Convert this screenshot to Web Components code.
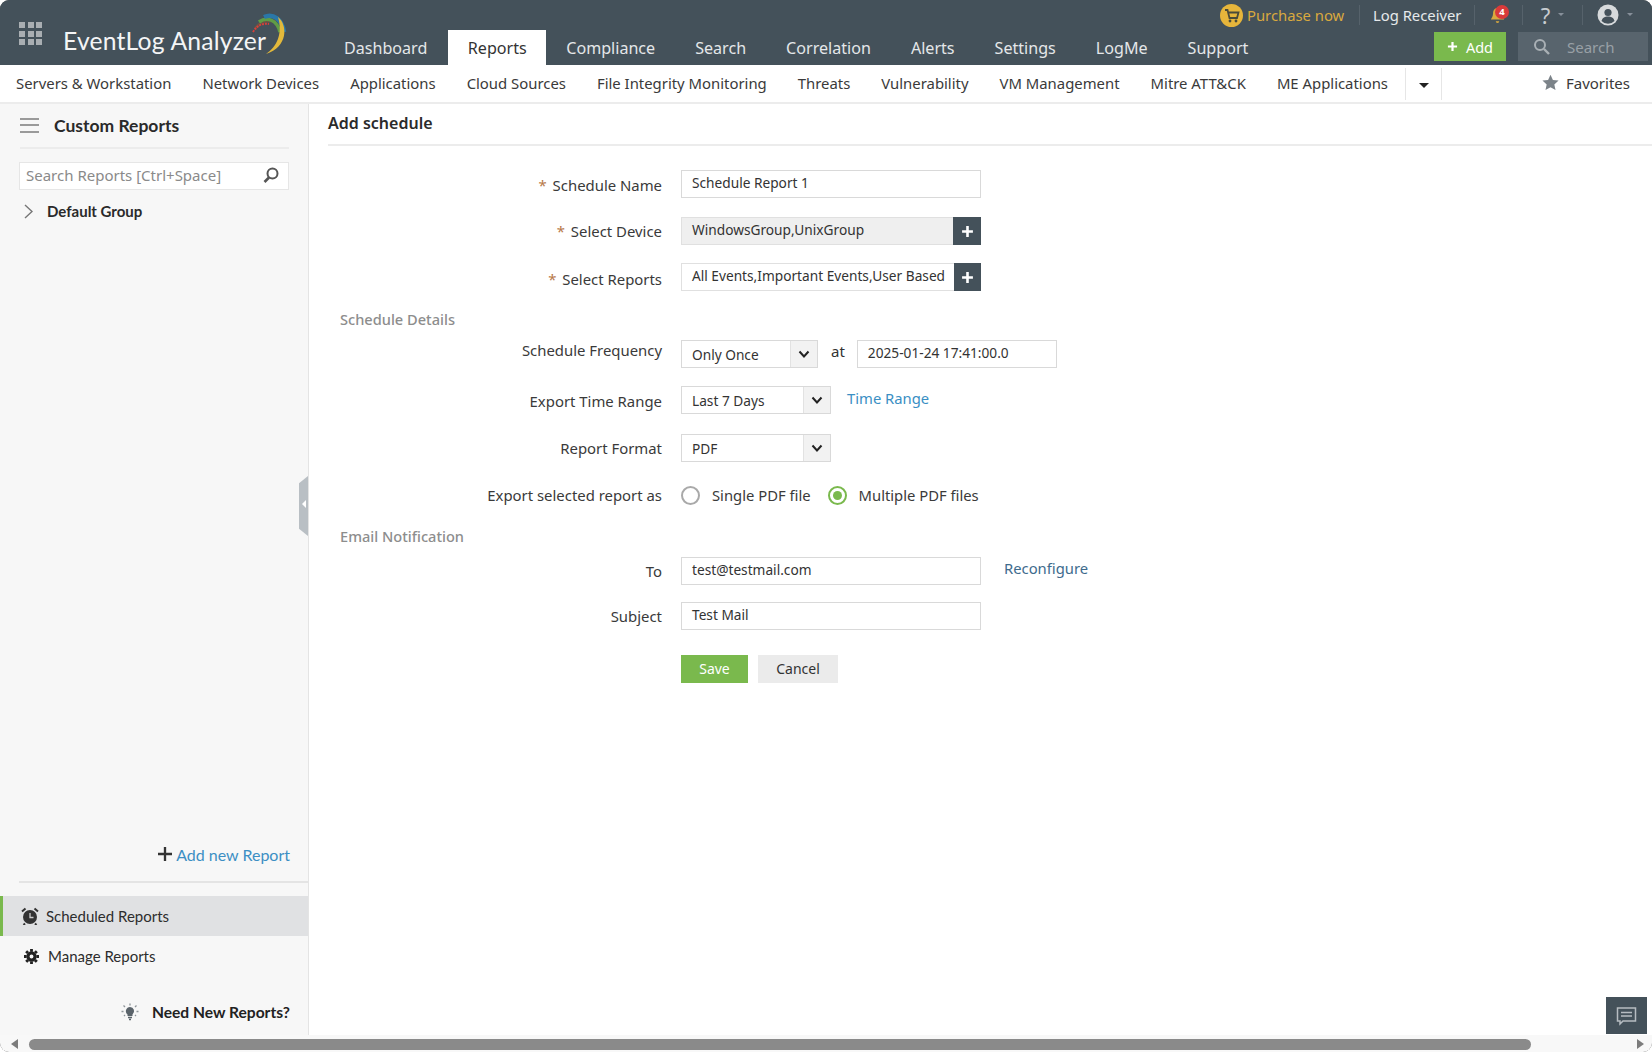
<!DOCTYPE html>
<html>
<head>
<meta charset="utf-8">
<title>EventLog Analyzer</title>
<style>
  html, body { margin: 0; height: 100%; background: #fff; overflow: hidden; }
  body { font-family: "Noto Sans", "Open Sans", sans-serif; color: #333; }
</style>
</head>
<body>
<el-app></el-app>

<script>
const define = (name, css, html) => {
  customElements.define(name, class extends HTMLElement {
    connectedCallback() {
      if (this.shadowRoot) return;
      this.attachShadow({ mode: 'open' });
      const body = typeof html === 'function' ? html(this) : html;
      this.shadowRoot.innerHTML = `<style>${css}</style>${body}`;
    }
  });
};

const plus = (s, c) => `<svg width="${s}" height="${s}" viewBox="0 0 12 12"><path d="M6 1v10M1 6h10" stroke="${c}" stroke-width="2.4" fill="none"/></svg>`;

define('el-header', `
  :host { display: flex; height: 65px; background: #44515a; color: #e8ebed; flex: none; }
  .brand { width: 324px; flex: none; display: flex; padding: 22px 0 0 19px; box-sizing: border-box; }
  .grid { width: 23px; height: 23px; display: grid; grid-template-columns: repeat(3, 6px); gap: 2.5px; }
  .grid i { background: #a9aeb2; }
  .logo { display: flex; margin: -10px 0 0 21px; height: 44px; align-items: flex-end; }
  .logo span { font: 400 24.7px/31px Lato, sans-serif; color: #f4f5f6; white-space: nowrap; letter-spacing: .2px; }
  .logo svg { margin: 1px 0 0 -19px; align-self: flex-start; flex: none; }
  nav { display: flex; align-self: flex-end; height: 35px; flex: 1; min-width: 0; }
  nav a { display: flex; align-items: center; padding: 0 20px; font-size: 16.1px; color: #e4e7e9; white-space: nowrap; }
  nav a.on { background: #fff; color: #333; margin-left: 1px; padding: 0 19.5px; }
  .right { width: 432px; flex: none; display: flex; flex-direction: column; }
  .top { display: flex; height: 30px; align-items: center; font-size: 14.8px; }
  .top .cart { margin-right: 4px; display: flex; }
  .top .buy { color: #d9a93e; width: 112px; white-space: nowrap; }
  .sep { width: 1px; height: 20px; background: #56626b; flex: none; }
  .top .log { color: #e6e9eb; width: 114px; box-sizing: border-box; padding-left: 13px; white-space: nowrap; }
  .bell { position: relative; width: 47px; height: 20px; display: flex; align-items: center; padding-left: 15px; box-sizing: border-box; }
  .bell b { position: absolute; left: 20px; top: 0; width: 14px; height: 14px; border-radius: 50%; background: #d93a3a; color: #fff; font: 700 9.5px/14px "Noto Sans", sans-serif; text-align: center; }
  .help { width: 59px; display: flex; justify-content: center; align-items: center; gap: 8px; font-size: 22px; color: #c8ccd0; box-sizing: border-box; }
  .tiny { width: 0; height: 0; border: 3px solid transparent; border-top: 3px solid #87909a; margin-top: 2px; }
  .user { display: flex; align-items: center; gap: 8px; padding-left: 14px; }
  .bottom { display: flex; margin-top: 2px; padding-left: 214px; gap: 12px; }
  .add { width: 72px; height: 29px; background: #7ab94d; color: #fff; font-size: 14.5px; display: flex; align-items: center; justify-content: center; gap: 8px; }
  .search { width: 130px; height: 29px; background: #58646d; display: flex; align-items: center; color: #98a0a6; font-size: 15px; padding-left: 15px; box-sizing: border-box; gap: 17px; }
`, `
  <div class="brand">
    <div class="grid"><i></i><i></i><i></i><i></i><i></i><i></i><i></i><i></i><i></i></div>
    <div class="logo">
      <span>EventLog Analyzer</span>
      <svg width="44" height="46" viewBox="0 0 44 46" fill="none">
        <path d="M8 16C13 8 22 6 29 9" stroke="#6d5144" stroke-width="3"/>
        <path d="M6 19C10 12 16 10 22 11" stroke="#d8403a" stroke-width="2" stroke-dasharray="2 1"/>
        <path d="M12 9C20 3 30 7 33 19" stroke="#5f9d46" stroke-width="3.5"/>
        <path d="M17 4C26 0 35 6 37 19" stroke="#2a77a8" stroke-width="4.5"/>
        <path d="M31 4C41 12 41 34 19 41C30 34 36 20 31 4Z" fill="#e3b93b"/>
      </svg>
    </div>
  </div>
  <nav>
    <a>Dashboard</a><a class="on">Reports</a><a>Compliance</a><a>Search</a><a>Correlation</a><a>Alerts</a><a>Settings</a><a>LogMe</a><a>Support</a>
  </nav>
  <div class="right">
    <div class="top">
      <span class="cart"><svg width="23" height="23" viewBox="0 0 23 23"><circle cx="11.5" cy="11.5" r="11.5" fill="#e6b53b"/><path d="M5 6h2.5l2 8h7.5l1.5-5.5H8.5" fill="none" stroke="#4a4a3a" stroke-width="1.8"/><circle cx="10" cy="17" r="1.4" fill="#4a4a3a"/><circle cx="16" cy="17" r="1.4" fill="#4a4a3a"/></svg></span>
      <span class="buy">Purchase now</span>
      <span class="sep"></span>
      <span class="log">Log Receiver</span>
      <span class="sep"></span>
      <span class="bell"><svg width="15" height="18" viewBox="0 0 17 20"><path d="M8.5 2C5 2 3.5 5 3.5 8c0 4-2 5.5-2.5 7h15c-.5-1.500-2.500-3-2.500-7 0-3-1.500-6-5-6Z" fill="#d9a93e"/><path d="M6.500 17a2 2 0 0 0 4 0Z" fill="#d9a93e"/></svg><b>4</b></span>
      <span class="sep"></span>
      <span class="help">?<i class="tiny"></i></span>
      <span class="sep"></span>
      <span class="user"><svg width="22" height="22" viewBox="0 0 22 22"><circle cx="11" cy="11" r="10.500" fill="#d7dadc"/><circle cx="11" cy="8.500" r="3.600" fill="#44515a"/><path d="M4.500 17c1-3.500 3.500-4.500 6.500-4.500s5.500 1 6.500 4.500a9 9 0 0 1-13 0Z" fill="#44515a"/></svg><i class="tiny"></i></span>
    </div>
    <div class="bottom">
      <div class="add">${plus(11, '#fff')}<span>Add</span></div>
      <div class="search"><svg width="17" height="17" viewBox="0 0 17 17" fill="none"><circle cx="7" cy="7" r="5" stroke="#a9b0b5" stroke-width="2"/><path d="M11 11l5 5" stroke="#a9b0b5" stroke-width="2.400"/></svg><span>Search</span></div>
    </div>
  </div>
`);

define('el-subnav', `
  :host { display: flex; height: 35px; flex: none; background: #fff; border-bottom: 2px solid #ececec; font-size: 14.88px; color: #3a3a3a; align-items: center; padding: 0 0 2px 16px; }
  a { margin-right: 31px; white-space: nowrap; }
  .more { width: 35px; height: 32px; margin: 2px 0 0 -14px; border: solid #e6e6e6; border-width: 0 1px; display: flex; align-items: center; justify-content: center; }
  .more i { width: 0; height: 0; border: 5px solid transparent; border-top: 5px solid #222; margin-top: 8px; }
  .fav { margin-left: auto; padding-right: 22px; display: flex; align-items: center; gap: 7px; font-size: 15px; }
`, `
  <a>Servers &amp; Workstation</a><a>Network Devices</a><a>Applications</a><a>Cloud Sources</a><a>File Integrity Monitoring</a><a>Threats</a><a>Vulnerability</a><a>VM Management</a><a>Mitre ATT&amp;CK</a><a>ME Applications</a>
  <div class="more"><i></i></div>
  <div class="fav"><svg width="17" height="17" viewBox="0 0 24 24"><path d="M12 1l3.400 7.400 8 .9-6 5.400 1.700 8L12 18.600 4.900 22.700l1.700-8-6-5.400 8-.9Z" fill="#7c8389"/></svg><span>Favorites</span></div>
`);

define('el-sidenav-item', `
  :host { display: flex; align-items: center; height: 40px; font: 400 15px Lato, sans-serif; color: #2d2d2d; box-sizing: border-box; }
  :host([active]) { background: #e0e1e3; border-left: 3px solid #7ab94d; }
  .ico { display: flex; }
`, `<span class="ico"><slot name="icon"></slot></span><slot></slot>`);

define('el-sidebar', `
  :host { display: flex; flex-direction: column; width: 309px; flex: none; background: #f7f7f7; border-right: 1px solid #e4e4e4; box-sizing: border-box; position: relative; font-family: Lato, sans-serif; }
  .head { display: flex; align-items: center; height: 42px; padding-bottom: 1px; margin-left: 20px; width: 269px; border-bottom: 2px solid #ececec; }
  .burger { width: 19px; height: 15px; border: solid #9a9a9a; border-width: 2px 0; position: relative; margin-right: 15px; box-sizing: border-box; }
  .burger::after { content: ""; position: absolute; left: 0; right: 0; top: 4.500px; height: 2px; background: #9a9a9a; }
  .head b { font: 700 17.500px Lato, sans-serif; color: #2a2a2a; }
  .search { margin: 13px 0 0 19px; width: 270px; height: 28px; box-sizing: border-box; background: #fff; border: 1px solid #e6e6e6; display: flex; align-items: center; justify-content: space-between; padding: 0 8px 2px 6px; font: 15px "Noto Sans", sans-serif; color: #8a8a8a; }
  .tree { display: flex; align-items: center; margin: 9px 0 0 24px; height: 24px; font: 700 15px Lato, sans-serif; color: #2a2a2a; gap: 14px; }
  .spring { flex: 1; }
  .newr { display: flex; justify-content: flex-end; align-items: center; gap: 4px; padding-right: 18px; color: #3c8fc4; font: 16px Lato, sans-serif; height: 20px; }
  .rule { margin: 17px 0 13px 19px; height: 2px; background: #e4e4e4; }
  el-sidenav-item { padding-left: 21px; }
  el-sidenav-item[active] { padding-left: 18px; }
  .ask { display: flex; justify-content: flex-end; align-items: center; padding-right: 18px; margin: 27px 0 14px; font: 700 15.6px Lato, sans-serif; color: #222; gap: 13px; }
  .grip { position: absolute; right: 0; top: 372px; width: 9px; height: 60px; background: #b9bfc4; clip-path: polygon(0 12%, 100% 0, 100% 100%, 0 88%); }
  .grip::after { content: ""; position: absolute; left: 3px; top: 24px; border: 4px solid transparent; border-right: 4px solid #fff; border-left: 0; }
`, `
  <div class="head"><span class="burger"></span><b>Custom Reports</b></div>
  <div class="search"><span>Search Reports [Ctrl+Space]</span><svg width="18" height="18" viewBox="0 0 18 18" fill="none"><circle cx="10.500" cy="7.500" r="5" stroke="#555" stroke-width="2"/><path d="M7 11.500L2.500 16" stroke="#555" stroke-width="2.600"/></svg></div>
  <div class="tree"><svg width="9" height="15" viewBox="0 0 9 15" fill="none"><path d="M1 1l7 6.500-7 6.500" stroke="#777" stroke-width="1.400"/></svg><span>Default Group</span></div>
  <div class="spring"></div>
  <div class="newr"><svg width="14" height="14" viewBox="0 0 12 12"><path d="M6 0v12M0 6h12" stroke="#333" stroke-width="2"/></svg><span>Add new Report</span></div>
  <div class="rule"></div>
  <el-sidenav-item active>
    <svg slot="icon" style="margin-right:7px" width="18" height="18" viewBox="0 0 18 18"><circle cx="9" cy="10" r="7" fill="#333"/><path d="M9 6v4.500h3.500" stroke="#ccc" stroke-width="1.300" fill="none"/><path d="M1 4.500L4.500 1.500M17 4.500L13.500 1.500M4 16.500l-1.500 1.500M14 16.500l1.500 1.500" stroke="#333" stroke-width="2"/></svg>
    Scheduled Reports
  </el-sidenav-item>
  <el-sidenav-item style="padding-left:24px">
    <svg slot="icon" style="margin-right:9px" width="15" height="15" viewBox="0 0 16 16"><circle cx="8" cy="8" r="3.800" fill="none" stroke="#222" stroke-width="3.400"/><path d="M8 0v16M0 8h16M2.300 2.300l11.400 11.400M13.700 2.300L2.300 13.700" stroke="#222" stroke-width="3" stroke-dasharray="2.800 10.400 2.800 0"/></svg>
    Manage Reports
  </el-sidenav-item>
  <div class="ask"><svg width="18" height="18" viewBox="0 0 18 18"><path d="M9 4a4.200 4.200 0 0 0-2.500 7.500V13h5v-1.500A4.200 4.200 0 0 0 9 4Z" fill="#5a636a"/><path d="M7 14.500h4M8 16.500h2" stroke="#5a636a" stroke-width="1.400"/><path d="M9 .5v2M2.500 2.500L4 4M15.500 2.500L14 4M.5 8.500h2M15.500 8.500h2M3 13l1-1M15 13l-1-1" stroke="#8e959a" stroke-width="1.300"/></svg><span>Need New Reports?</span></div>
  <div class="grip"></div>
`);

define('el-field', `
  :host { display: flex; align-items: flex-start; height: 28px; font-size: 14.9px; color: #3a3a3a; }
  label { width: 334px; flex: none; text-align: right; margin: var(--ly, 5px) 19px 0 0; box-sizing: border-box; line-height: 20px; white-space: nowrap; }
  label i { font-style: normal; color: #b8794a; margin-right: 2px; }
  .c { display: flex; align-items: flex-start; flex: none; }
`, host => `<label>${host.hasAttribute('req') ? '<i>*</i> ' : ''}${host.getAttribute('label')}</label><div class="c"><slot></slot></div>`);

define('el-input', `
  :host { display: flex; align-items: center; width: var(--w, 300px); height: 28px; box-sizing: border-box; border: 1px solid #d9d9d9; background: #fff; padding: 0 0 4px 10px; font-size: 13.7px; color: #333; white-space: nowrap; overflow: hidden; flex: none; }
`, `<slot></slot>`);

define('el-picker', `
  :host { display: flex; width: 300px; height: 28px; box-sizing: border-box; flex: none; font-size: 13.7px; color: #333; white-space: nowrap; }
  .v { flex: 1; min-width: 0; display: flex; align-items: center; padding: 0 0 4px 10px; box-sizing: border-box; border: 1px solid #e0e0e0; border-right: 0; }
  :host([filled]) .v { background: #efefef; }
  .b { width: var(--bw, 28px); flex: none; background: #44515a; display: flex; align-items: center; justify-content: center; }
`, `<div class="v"><slot></slot></div><div class="b">${plus(13, '#fff')}</div>`);

define('el-select', `
  :host { display: flex; width: var(--w, 150px); height: 28px; box-sizing: border-box; border: 1px solid #d9d9d9; flex: none; font-size: 13.7px; color: #333; }
  .v { flex: 1; display: flex; align-items: center; padding: 0 0 0 10px; white-space: nowrap; }
  .b { width: 27px; background: #f2f2f2; border-left: 1px solid #e2e2e2; display: flex; align-items: center; justify-content: center; box-sizing: border-box; }
`, `<div class="v"><slot></slot></div><div class="b"><svg width="12" height="9" viewBox="0 0 12 9" fill="none"><path d="M1.500 1.500L6 6.500l4.500-5" stroke="#222" stroke-width="2"/></svg></div>`);

define('el-radio', `
  :host { display: inline-flex; align-items: center; height: 28px; font-size: 14.8px; color: #3a3a3a; white-space: nowrap; }
  i { width: 19px; height: 19px; box-sizing: border-box; border-radius: 50%; border: 2px solid #a9a9a9; margin-right: 12px; display: flex; align-items: center; justify-content: center; background: #fff; }
  :host([on]) i { border-color: #7ab94d; }
  :host([on]) i::after { content: ""; width: 9px; height: 9px; border-radius: 50%; background: #7ab94d; }
`, `<i></i><slot></slot>`);

define('el-section', `
  :host { display: block; font-size: 14.6px; font-weight: 500; line-height: 20px; color: #8d8d8d; padding-left: 12px; }
`, `<slot></slot>`);

define('el-button', `
  :host { display: flex; align-items: center; justify-content: center; height: 28px; font-size: 14px; padding-bottom: 1px; box-sizing: border-box; width: 67px; background: #7ab94d; color: #fff; flex: none; }
  :host([plain]) { width: 80px; background: #ebebeb; color: #333; }
`, `<slot></slot>`);

define('el-schedule-form', `
  :host { display: block; flex: 1; min-width: 0; padding-left: 19px; background: #fff; position: relative; }
  h1 { margin: 0; font: 600 16px/39px "Noto Sans", sans-serif; color: #2b2b2b; height: 40px; border-bottom: 2px solid #ececec; }
  .form { display: flex; flex-direction: column; padding-top: 24px; }
  .mt17 { margin-top: 17px; }
  .mt18 { margin-top: 18px; }
  .mt19 { margin-top: 19px; }
  .at { margin: 1px 12px 0 13px; font-size: 15px; color: #333; }
  .link { margin: 2px 0 0 16px; font-size: 14.8px; color: #3a8fc4; white-space: nowrap; }
  .link.dark { margin: 1px 0 0 23px; color: #3e6b8d; }
  .radios { display: flex; gap: 17px; }
  .btns { display: flex; gap: 10px; }
  .chat { position: absolute; right: 5px; bottom: 1px; width: 41px; height: 37px; background: #44515a; display: flex; align-items: center; justify-content: center; }
`, `
  <h1>Add schedule</h1>
  <div class="form">
    <el-field req label="Schedule Name"><el-input>Schedule Report 1</el-input></el-field>
    <el-field class="mt19" req label="Select Device" style="--ly:4px"><el-picker filled>WindowsGroup,UnixGroup</el-picker></el-field>
    <el-field class="mt18" req label="Select Reports" style="--ly:6px"><el-picker style="--bw:27px">All Events,Important Events,User Based</el-picker></el-field>
    <el-section style="margin-top:18px">Schedule Details</el-section>
    <el-field style="margin-top:11px;--ly:0px" label="Schedule Frequency"><el-select style="--w:137px">Only Once</el-select><span class="at">at</span><el-input style="--w:200px">2025-01-24 17:41:00.0</el-input></el-field>
    <el-field class="mt18" label="Export Time Range" style="--ly:5px"><el-select>Last 7 Days</el-select><span class="link">Time Range</span></el-field>
    <el-field style="margin-top:20px;--ly:4px" label="Report Format"><el-select>PDF</el-select></el-field>
    <el-field style="margin-top:19px;--ly:4px" label="Export selected report as"><div class="radios"><el-radio>Single PDF file</el-radio><el-radio on>Multiple PDF files</el-radio></div></el-field>
    <el-section style="margin-top:17px">Email Notification</el-section>
    <el-field style="margin-top:11px;--ly:4px" label="To"><el-input>test@testmail.com</el-input><span class="link dark">Reconfigure</span></el-field>
    <el-field class="mt17" label="Subject" style="--ly:4px"><el-input>Test Mail</el-input></el-field>
    <el-field style="margin-top:25px" label="&nbsp;"><div class="btns"><el-button>Save</el-button><el-button plain>Cancel</el-button></div></el-field>
  </div>
  <div class="chat"><svg width="21" height="20" viewBox="0 0 21 20" fill="none"><path d="M1.500 2h18v13H7l-3 3v-3H1.500Z" stroke="#b6bcc1" stroke-width="1.500"/><path d="M5 6.500h11M5 10h11" stroke="#b6bcc1" stroke-width="1.500"/></svg></div>
`);

define('el-hscroll', `
  :host { display: flex; align-items: center; height: 17px; flex: none; background: #f8f8f8; padding: 1px 0 0; box-sizing: border-box; position: relative; }
  .l, .r { width: 0; height: 0; border: 5.500px solid transparent; flex: none; }
  .l { border-right: 7px solid #7c7c7c; border-left: 0; margin-left: 11px; }
  .t { width: 1502px; height: 11px; margin-left: 11px; border-radius: 6px; background: #8a8a8a; flex: none; }
  .r { border-left: 7px solid #7c7c7c; border-right: 0; margin-left: auto; margin-right: 8px; }
`, `<i class="l"></i><div class="t"></div><i class="r"></i>`);

define('el-app', `
  :host { display: flex; flex-direction: column; height: 1052px; overflow: hidden; box-sizing: border-box; border-radius: 9px; box-shadow: inset 0 0 0 1px #555; background: #fff; }
  .main { flex: 1; min-height: 0; display: flex; }
`, `
  <el-header></el-header>
  <el-subnav></el-subnav>
  <div class="main"><el-sidebar></el-sidebar><el-schedule-form></el-schedule-form></div>
  <el-hscroll></el-hscroll>
`);
</script>
</body>
</html>
